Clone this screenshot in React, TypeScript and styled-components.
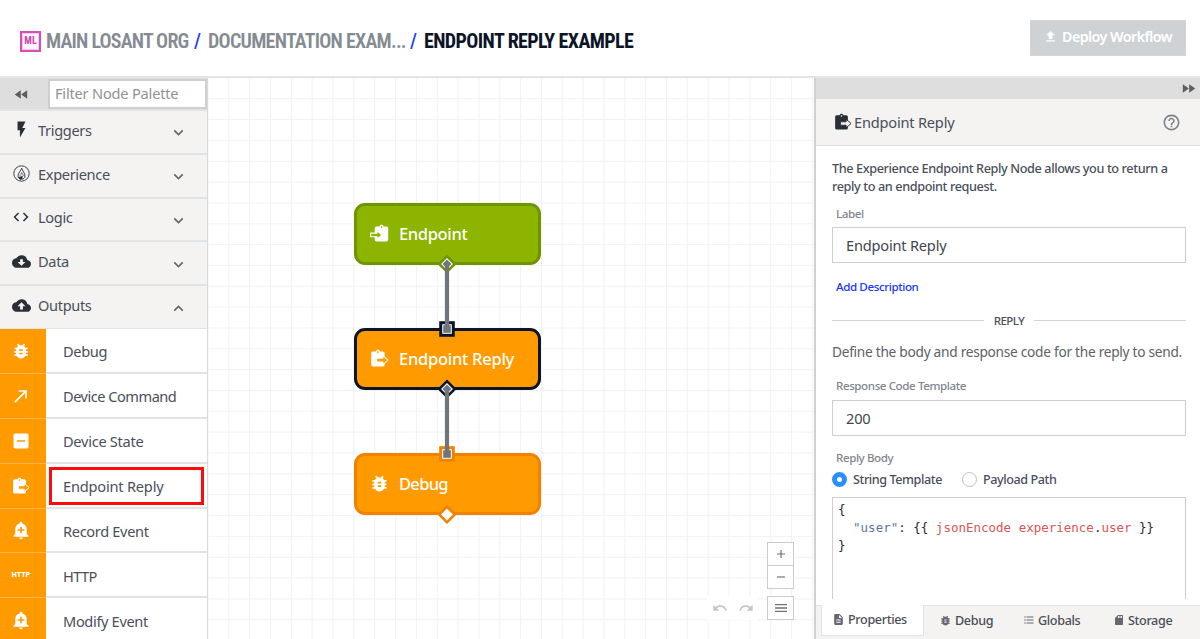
import React from "react";
import styled, { createGlobalStyle, css } from "styled-components";
import {
  MdAdd,
  MdAddAlert,
  MdBugReport,
  MdCallMade,
  MdCode,
  MdDescription,
  MdFastForward,
  MdFastRewind,
  MdFileUpload,
  MdFlashOn,
  MdFormatListBulleted,
  MdHelpOutline,
  MdIndeterminateCheckBox,
  MdKeyboardArrowDown,
  MdKeyboardArrowUp,
  MdMenu,
  MdRedo,
  MdRemove,
  MdSdStorage,
  MdUndo,
} from "react-icons/md";

const GlobalStyle = createGlobalStyle`
  *, *::before, *::after { box-sizing: border-box; }
  body {
    margin: 0;
    background: #fff;
    color: #4a4f5a;
    font-family: "Noto Sans", sans-serif;
    overflow: hidden;
  }
  svg { flex: none; }
`;

const ink = "#2a2f36";
const orange = "#ff9b00";
const rule = "#e2e3e4";

const Page = styled.div`
  display: flex;
  flex-direction: column;
  height: 639px;
  width: 1200px;
  overflow: hidden;
`;

/* ---------- header ---------- */

const Header = styled.header`
  display: flex;
  align-items: center;
  justify-content: space-between;
  height: 78px;
  flex: none;
  padding: 0 14px 1px 20px;
  border-bottom: 2px solid #e4e5e6;
`;

const Breadcrumbs = styled.nav`
  display: flex;
  align-items: center;
  padding-top: 7px;
  font: 700 20px/24px Roboto, sans-serif;
  font-stretch: 75%;
  white-space: nowrap;
`;

const OrgBadge = styled.span`
  display: flex;
  align-items: center;
  justify-content: center;
  width: 21px;
  height: 21px;
  margin: 0 5px 0 0;
  border: 2px solid #d64fb9;
  box-shadow: inset 0 0 0 1px #f3c9ea;
  background: #faf6f8;
  color: #cf45b0;
  font-size: 10px;
  line-height: 10px;
`;

const Crumb = styled.span<{ $current?: boolean; $width: number; $track: number }>`
  width: ${(p) => p.$width}px;
  letter-spacing: ${(p) => p.$track}px;
  font-weight: ${(p) => (p.$current ? 700 : 600)};
  color: ${(p) => (p.$current ? "#0c1527" : "#848b92")};
`;

const Slash = styled.span`
  width: 19px;
  padding-left: 5px;
  color: #1a3cff;
  font-weight: 500;
`;

const DeployButton = styled.button`
  display: flex;
  align-items: center;
  gap: 4px;
  width: 156px;
  height: 36px;
  padding: 0 0 2px 12px;
  border: 1px solid #d4d7d7;
  background: #ced2d5;
  color: #fff;
  font: 600 14.2px/20px "Noto Sans", sans-serif;
  letter-spacing: -0.5px;
  white-space: nowrap;
`;

/* ---------- palette ---------- */

const Body = styled.div`
  display: flex;
  flex: 1;
  min-height: 0;
`;

const Palette = styled.aside`
  display: flex;
  flex-direction: column;
  width: 208px;
  flex: none;
  border-right: 1px solid #d9dadb;
  font-size: 14.6px;
  white-space: nowrap;
`;

const FilterBar = styled.div`
  display: flex;
  align-items: flex-start;
  height: 31px;
  flex: none;
  padding-top: 1px;
  background: #dedede;
  color: #5a5d61;
`;

const CollapseButton = styled.span`
  display: flex;
  justify-content: center;
  width: 48px;
  padding: 7px 6px 0 0;
`;

const FilterInput = styled.div`
  flex: 1;
  height: 30px;
  padding: 2px 5px;
  border: 2px solid #cfcfcf;
  background: #fff;
  color: #929292;
  line-height: 20px;
  letter-spacing: -0.2px;
`;

const Category = styled.div`
  display: flex;
  align-items: center;
  height: 43.8px;
  flex: none;
  padding: 0 19px 4px 11px;
  border-top: 2px solid ${rule};
  background: #f4f3f2;
`;

const CategoryIcon = styled.span`
  display: flex;
  justify-content: center;
  width: 20px;
  margin-right: 7px;
  color: ${ink};
`;

const CategoryName = styled.span`
  flex: 1;
  line-height: 20px;
  letter-spacing: -0.35px;
`;

const Chevron = styled.span`
  display: flex;
  padding-top: 6px;
  color: #5f6368;
`;

const NodeList = styled.div`
  display: flex;
  flex-direction: column;
  flex: none;
  border-top: 1px solid ${rule};
`;

const NodeRow = styled.div`
  display: flex;
  height: 44.9px;
  flex: none;
`;

const NodeSwatch = styled.span`
  display: flex;
  align-items: center;
  justify-content: center;
  width: 46px;
  padding-right: 4px;
  border-bottom: 1px solid #ffb64a;
  background: ${orange};
  color: #fff;
`;

const NodeName = styled.span<{ $marked?: boolean; $track: number }>`
  position: relative;
  display: flex;
  align-items: center;
  flex: 1;
  padding: 2px 0 0 17px;
  border-bottom: 2px solid ${rule};
  background: #fff;
  letter-spacing: ${(p) => p.$track}px;
  ${(p) =>
    p.$marked &&
    css`
      &::after {
        content: "";
        position: absolute;
        inset: 3px 3px 2px 3px;
        border: 3px solid #fb0d0d;
      }
    `}
`;

const HttpMark = styled.span`
  font: 900 6.5px/10px Inter, sans-serif;
  letter-spacing: 0.1px;
`;

/* ---------- canvas ---------- */

const Canvas = styled.main`
  position: relative;
  flex: 1;
  background-color: #fff;
  background-image: linear-gradient(to right, #f3f1f1 1px, transparent 1px),
    linear-gradient(to bottom, #f3f1f1 1px, transparent 1px);
  background-size: 20.85px 20.85px;
  background-position: 20.3px 20.2px;
`;

const FlowNode = styled.div<{ $top: number; $fill: string; $edge: string; $track: number }>`
  position: absolute;
  left: 146px;
  top: ${(p) => p.$top}px;
  display: flex;
  align-items: center;
  gap: 9px;
  width: 187px;
  height: 62px;
  padding: 0 0 1px 11px;
  border: 3px solid ${(p) => p.$edge};
  border-radius: 11px;
  background: ${(p) => p.$fill};
  color: #fff;
  font-size: 16.5px;
  font-weight: 500;
  letter-spacing: ${(p) => p.$track}px;
  white-space: nowrap;
`;

const FlowIcon = styled.span`
  display: flex;
  justify-content: center;
  width: 22px;
`;

const Wires = styled.svg`
  position: absolute;
  left: 226px;
  top: 170px;
`;

const CanvasControls = styled.div`
  position: absolute;
  right: 20px;
  bottom: 19px;
  display: flex;
  align-items: flex-end;
  gap: 9px;
`;

const History = styled.div`
  display: flex;
  gap: 1px;
`;

const HistoryButton = styled.span`
  display: flex;
  align-items: center;
  justify-content: center;
  width: 25px;
  height: 24px;
  background: #fff;
  color: #c3c6c8;
`;

const ControlStack = styled.div`
  display: flex;
  flex-direction: column;
`;

const ControlButton = styled.span<{ $gap?: number }>`
  display: flex;
  align-items: center;
  justify-content: center;
  width: 27px;
  height: 24px;
  margin-top: ${(p) => p.$gap ?? 0}px;
  border: 1px solid #c9cbcd;
  background: #fff;
  color: #6d7176;
`;

/* ---------- inspector ---------- */

const Inspector = styled.aside`
  display: flex;
  flex-direction: column;
  width: 386px;
  flex: none;
  border-left: 2px solid #cfd0d1;
`;

const InspectorBar = styled.div`
  display: flex;
  align-items: center;
  justify-content: flex-end;
  height: 21px;
  flex: none;
  padding-right: 3px;
  background: #dedede;
  color: #5a5d61;
`;

const InspectorTitle = styled.div`
  display: flex;
  align-items: center;
  height: 47px;
  flex: none;
  padding: 0 19px 0 18px;
  border-bottom: 1px solid #dfdfdf;
  background: #f4f3f2;
  color: ${ink};
`;

const TitleText = styled.h2`
  flex: 1;
  margin: 0 0 0 2px;
  color: #4a4f5a;
  font-size: 14.6px;
  font-weight: 400;
  letter-spacing: -0.2px;
`;

const HelpIcon = styled.span`
  display: flex;
  color: #7b8188;
`;

const Form = styled.div`
  display: flex;
  flex-direction: column;
  height: 453px;
  flex: none;
  padding: 13px 14px 0 16px;
  overflow: hidden;
  white-space: nowrap;
`;

const Intro = styled.p`
  margin: 0;
  font-size: 12.7px;
  font-weight: 500;
  line-height: 18px;
  letter-spacing: -0.4px;
`;

const FieldLabel = styled.label<{ $top: number; $bottom: number }>`
  margin: ${(p) => p.$top}px 0 ${(p) => p.$bottom}px 4px;
  color: #7f868d;
  font-size: 11.6px;
  line-height: 16px;
  font-weight: 500;
  letter-spacing: -0.42px;
`;

const TextField = styled.div`
  height: 36px;
  flex: none;
  padding: 7px 13px;
  border: 1px solid #cdcfcf;
  background: #fff;
  color: #42464d;
  font-size: 14.6px;
  line-height: 20px;
  letter-spacing: -0.2px;
`;

const AddLink = styled.a`
  margin: 16px 0 0 4px;
  color: #1736ff;
  font-size: 11.6px;
  line-height: 16px;
  font-weight: 500;
  letter-spacing: -0.41px;
`;

const Divider = styled.div`
  display: flex;
  align-items: center;
  gap: 10px;
  height: 16px;
  margin-top: 18px;
  font-size: 11.6px;
  font-weight: 500;
  letter-spacing: -0.6px;
  &::before,
  &::after {
    content: "";
    flex: 1;
    border-top: 1px solid #d2d3d4;
  }
`;

const Hint = styled.p`
  margin: 14px 0 0;
  color: #5d6168;
  font-size: 13.7px;
  line-height: 20px;
  letter-spacing: -0.275px;
`;

const Radios = styled.div`
  display: flex;
  height: 18px;
  margin-bottom: 9px;
  font-size: 12.6px;
  font-weight: 500;
  letter-spacing: -0.42px;
`;

const RadioOption = styled.label<{ $width: number }>`
  display: flex;
  align-items: center;
  gap: 6px;
  width: ${(p) => p.$width}px;
`;

const RadioDot = styled.span<{ $on?: boolean }>`
  width: 15px;
  height: 15px;
  border-radius: 50%;
  border: ${(p) => (p.$on ? "5px solid #2b8ffb" : "1px solid #bfc1c3")};
  background: #fff;
`;

const CodeBox = styled.pre`
  height: 140px;
  flex: none;
  margin: 0;
  padding: 3px 5px;
  border: 1px solid #cdcfcf;
  color: #22262d;
  font: 12.5px/18px "DejaVu Sans Mono", monospace;
`;

const CodeKey = styled.span`
  color: #5b7897;
`;

const CodeVar = styled.span`
  color: #dc5453;
`;

const Tabs = styled.div`
  display: flex;
  flex: 1;
  margin-top: 6px;
  background: #f4f3f2;
  font-size: 12.6px;
  font-weight: 500;
  letter-spacing: -0.35px;
`;

const TabEdge = styled.span`
  width: 5px;
  border-top: 1px solid ${rule};
`;

const Tab = styled.span<{ $width: number; $active?: boolean }>`
  display: flex;
  align-items: center;
  gap: 3px;
  width: ${(p) => p.$width}px;
  flex: none;
  color: #4b4f55;
  svg {
    color: #65696f;
  }
  ${(p) =>
    p.$active
      ? css`
          height: 31px;
          padding: 0 0 2px 10px;
          border: 1px solid ${rule};
          border-top: 0;
          background: #fff;
        `
      : css`
          padding: 0 0 5px 15px;
          border-top: 1px solid ${rule};
        `}
`;

/* ---------- drawings ---------- */

type IconProps = { size: number; ground: string };

const board =
  "M18 3h-3.8C13.8 1.8 12.7 1 11.500 1S9.200 1.800 8.800 3H5a2 2 0 0 0-2 2v15a2 2 0 0 0 2 2h13a2 2 0 0 0 2-2V5a2 2 0 0 0-2-2z";

const ReplyIcon = ({ size, ground }: IconProps) => (
  <svg width={size} height={size} viewBox="0 0 24 24" fill="currentColor">
    <path d={board} transform="translate(-1.500 0)" />
    <circle cx="10" cy="4" r="1.100" fill={ground} />
    <path
      d="M8.500 11.700h7.700V8.300l6.600 5.700-6.600 5.700v-3.400H8.500z"
      fill={ground}
      stroke="currentColor"
      strokeWidth="1.300"
    />
  </svg>
);

const EndpointIcon = ({ size, ground }: IconProps) => (
  <svg width={size} height={size} viewBox="0 0 24 24" fill="currentColor">
    <path d={board} transform="translate(3 0)" />
    <circle cx="14.500" cy="4" r="1.100" fill={ground} />
    <path
      d="M.8 11.500h8V8.300l6.500 5.500-6.500 5.500v-3.200h-8z"
      fill={ground}
      stroke="currentColor"
      strokeWidth="1.500"
    />
  </svg>
);

const ExperienceIcon = () => (
  <svg width="17" height="17" viewBox="0 0 17 17" fill="none" stroke={ink}>
    <circle cx="8.500" cy="8.500" r="7.700" strokeWidth="0.900" />
    <path d="M8.700 3.200C8 5.600 5 8.200 5 11c0 2 1.600 3.300 3.500 3.300S12 13 12 11c0-2.800-2.600-5.400-3.300-7.800z" strokeWidth="0.900" />
    <path d="M5.200 12.600L9.800 10.800l-.6 3.200-2 .4z" fill={ink} stroke="none" />
    <path d="M8.800 7.500L6.800 11.500M8.800 7.500l1.800 3.500" strokeWidth="0.600" />
  </svg>
);

const CloudIcon = ({ up }: { up?: boolean }) => (
  <svg width="19" height="19" viewBox="0 0 24 24" fill={ink}>
    <path d="M19.350 10.040A7.490 7.490 0 0 0 12 4C9.110 4 6.600 5.640 5.350 8.040A5.994 5.994 0 0 0 0 14c0 3.310 2.690 6 6 6h13c2.760 0 5-2.240 5-5 0-2.640-2.050-4.780-4.650-4.960z" />
    <path
      d={up ? "M12 8l-5 5h3.200v4h3.600v-4H17z" : "M12 17.500l-5-5h3.200V9h3.600v3.500H17z"}
      fill="#f4f3f2"
    />
  </svg>
);

const Diamond = ({ y, edge, linked }: { y: number; edge: string; linked?: boolean }) => (
  <g transform={`translate(13 ${y}) rotate(45)`}>
    <rect x="-5.500" y="-5.500" width="11" height="11" fill="#fff" stroke={edge} strokeWidth="2.600" />
    {linked && <rect x="-3.200" y="-3.200" width="6.400" height="6.400" fill="#70757b" />}
  </g>
);

const Square = ({ y, edge }: { y: number; edge: string }) => (
  <g transform={`translate(13 ${y})`}>
    <rect x="-6.300" y="-6.300" width="12.600" height="12.600" fill="#fff" stroke={edge} strokeWidth="3" />
    <rect x="-3.800" y="-3.800" width="7.600" height="7.600" fill="#70757b" />
  </g>
);

/* ---------- content ---------- */

const categories = [
  { name: "Triggers", icon: <MdFlashOn size={19} /> },
  { name: "Experience", icon: <ExperienceIcon /> },
  { name: "Logic", icon: <MdCode size={18} /> },
  { name: "Data", icon: <CloudIcon /> },
  { name: "Outputs", icon: <CloudIcon up />, open: true },
];

const outputs = [
  { name: "Debug", track: -0.35, icon: <MdBugReport size={20} /> },
  { name: "Device Command", track: -0.5, icon: <MdCallMade size={20} /> },
  { name: "Device State", track: -0.28, icon: <MdIndeterminateCheckBox size={20} /> },
  { name: "Endpoint Reply", track: -0.2, icon: <ReplyIcon size={18} ground={orange} />, marked: true },
  { name: "Record Event", track: -0.33, icon: <MdAddAlert size={20} /> },
  { name: "HTTP", track: -0.6, icon: <HttpMark>HTTP</HttpMark> },
  { name: "Modify Event", track: -0.35, icon: <MdAddAlert size={20} /> },
];

export default function App() {
  return (
    <Page>
      <GlobalStyle />
      <Header>
        <Breadcrumbs>
          <OrgBadge>ML</OrgBadge>
          <Crumb $width={143} $track={-0.8}>MAIN LOSANT ORG</Crumb>
          <Slash>/</Slash>
          <Crumb $width={197} $track={-0.75}>DOCUMENTATION EXAM...</Crumb>
          <Slash>/</Slash>
          <Crumb $current $width={212} $track={-0.6}>ENDPOINT REPLY EXAMPLE</Crumb>
        </Breadcrumbs>
        <DeployButton>
          <MdFileUpload size={15} />
          Deploy Workflow
        </DeployButton>
      </Header>

      <Body>
        <Palette>
          <FilterBar>
            <CollapseButton>
              <MdFastRewind size={17} />
            </CollapseButton>
            <FilterInput>Filter Node Palette</FilterInput>
          </FilterBar>
          {categories.map((c) => (
            <Category key={c.name}>
              <CategoryIcon>{c.icon}</CategoryIcon>
              <CategoryName>{c.name}</CategoryName>
              <Chevron>
                {c.open ? <MdKeyboardArrowUp size={19} /> : <MdKeyboardArrowDown size={19} />}
              </Chevron>
            </Category>
          ))}
          <NodeList>
            {outputs.map((o) => (
              <NodeRow key={o.name}>
                <NodeSwatch>{o.icon}</NodeSwatch>
                <NodeName $marked={o.marked} $track={o.track}>{o.name}</NodeName>
              </NodeRow>
            ))}
          </NodeList>
        </Palette>

        <Canvas>
          <FlowNode $top={125} $fill="#8cb400" $edge="#6f9400" $track={-0.35}>
            <FlowIcon>
              <EndpointIcon size={19} ground="#8cb400" />
            </FlowIcon>
            Endpoint
          </FlowNode>
          <FlowNode $top={250} $fill={orange} $edge="#0c1527" $track={-0.27}>
            <FlowIcon>
              <ReplyIcon size={19} ground={orange} />
            </FlowIcon>
            Endpoint Reply
          </FlowNode>
          <FlowNode $top={375} $fill={orange} $edge="#ef8200" $track={-0.7}>
            <FlowIcon>
              <MdBugReport size={21} />
            </FlowIcon>
            Debug
          </FlowNode>
          <Wires width="26" height="290" viewBox="0 0 26 290">
            <Diamond y={16} edge="#6f9400" linked />
            <Square y={81} edge="#0c1527" />
            <Diamond y={141} edge="#0c1527" linked />
            <Square y={206} edge="#ef8200" />
            <Diamond y={266.500} edge="#ef8200" />
            <path d="M13 16V84M13 141V209" stroke="#70757b" strokeWidth="4.200" />
          </Wires>
          <CanvasControls>
            <History>
              <HistoryButton>
                <MdUndo size={16} />
              </HistoryButton>
              <HistoryButton>
                <MdRedo size={16} />
              </HistoryButton>
            </History>
            <ControlStack>
              <ControlButton>
                <MdAdd size={14} />
              </ControlButton>
              <ControlButton $gap={-1}>
                <MdRemove size={14} />
              </ControlButton>
              <ControlButton $gap={7}>
                <MdMenu size={16} />
              </ControlButton>
            </ControlStack>
          </CanvasControls>
        </Canvas>

        <Inspector>
          <InspectorBar>
            <MdFastForward size={17} />
          </InspectorBar>
          <InspectorTitle>
            <ReplyIcon size={18} ground="#f4f3f2" />
            <TitleText>Endpoint Reply</TitleText>
            <HelpIcon>
              <MdHelpOutline size={19} />
            </HelpIcon>
          </InspectorTitle>
          <Form>
            <Intro>
              The Experience Endpoint Reply Node allows you to return a
              <br />
              reply to an endpoint request.
            </Intro>
            <FieldLabel $top={11} $bottom={5}>Label</FieldLabel>
            <TextField>Endpoint Reply</TextField>
            <AddLink>Add Description</AddLink>
            <Divider>REPLY</Divider>
            <Hint>Define the body and response code for the reply to send.</Hint>
            <FieldLabel $top={16} $bottom={6}>Response Code Template</FieldLabel>
            <TextField>200</TextField>
            <FieldLabel $top={14} $bottom={5}>Reply Body</FieldLabel>
            <Radios>
              <RadioOption $width={130}>
                <RadioDot $on />
                String Template
              </RadioOption>
              <RadioOption $width={110}>
                <RadioDot />
                Payload Path
              </RadioOption>
            </Radios>
            <CodeBox>
              {"{\n  "}
              <CodeKey>"user"</CodeKey>
              {": {{ "}
              <CodeVar>jsonEncode experience</CodeVar>.<CodeVar>user</CodeVar>
              {" }}\n}"}
            </CodeBox>
          </Form>
          <Tabs>
            <TabEdge />
            <Tab $width={103} $active>
              <MdDescription size={13} />
              Properties
            </Tab>
            <Tab $width={84}>
              <MdBugReport size={13} />
              Debug
            </Tab>
            <Tab $width={90}>
              <MdFormatListBulleted size={12} />
              Globals
            </Tab>
            <Tab $width={102}>
              <MdSdStorage size={12} />
              Storage
            </Tab>
          </Tabs>
        </Inspector>
      </Body>
    </Page>
  );
}
